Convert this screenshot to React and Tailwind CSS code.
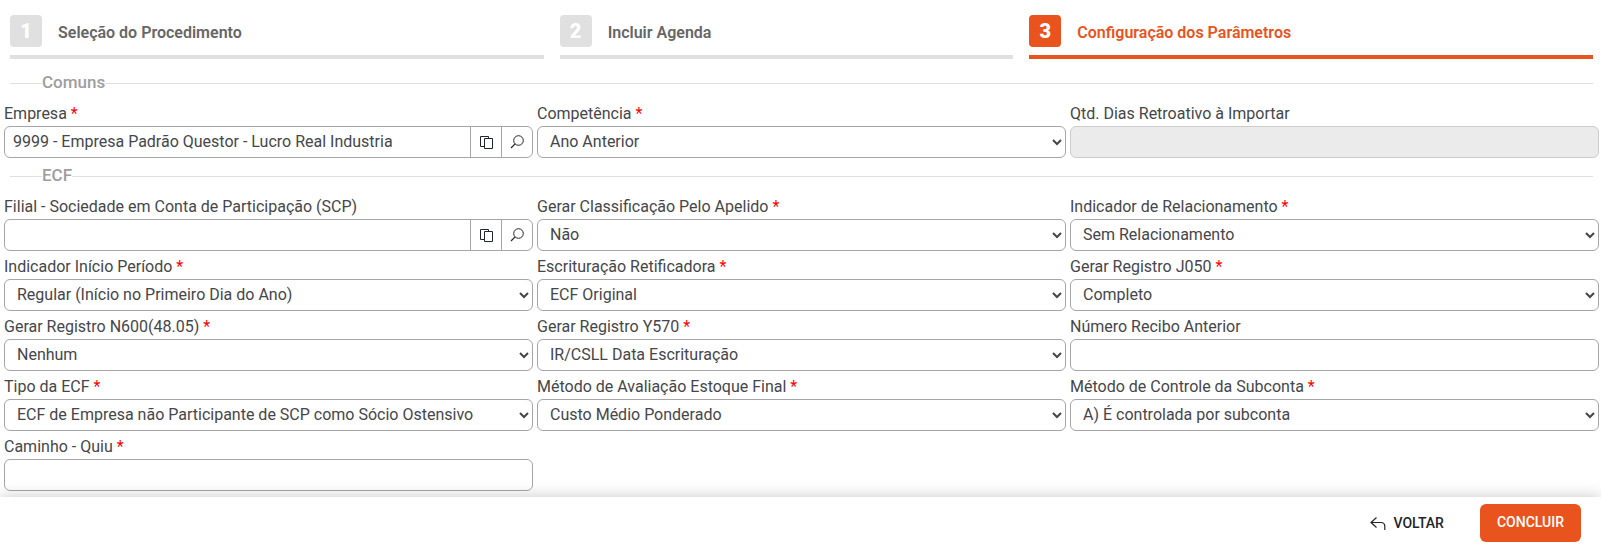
const steps = [
  { number: 1, title: 'Seleção do Procedimento' },
  { number: 2, title: 'Incluir Agenda' },
  { number: 3, title: 'Configuração dos Parâmetros', active: true },
];

const commonFields = [
  { id: 'empresa', label: 'Empresa', required: true, type: 'lookup', value: '9999 - Empresa Padrão Questor - Lucro Real Industria' },
  { id: 'competencia', label: 'Competência', required: true, type: 'select', value: 'Ano Anterior' },
  { id: 'dias', label: 'Qtd. Dias Retroativo à Importar', type: 'text', disabled: true },
];

const ecfFields = [
  { id: 'filial', label: 'Filial - Sociedade em Conta de Participação (SCP)', type: 'lookup' },
  { id: 'apelido', label: 'Gerar Classificação Pelo Apelido', required: true, type: 'select', value: 'Não' },
  { id: 'relacionamento', label: 'Indicador de Relacionamento', required: true, type: 'select', value: 'Sem Relacionamento' },
  { id: 'inicio', label: 'Indicador Início Período', required: true, type: 'select', value: 'Regular (Início no Primeiro Dia do Ano)' },
  { id: 'retificadora', label: 'Escrituração Retificadora', required: true, type: 'select', value: 'ECF Original' },
  { id: 'j050', label: 'Gerar Registro J050', required: true, type: 'select', value: 'Completo' },
  { id: 'n600', label: 'Gerar Registro N600(48.05)', required: true, type: 'select', value: 'Nenhum' },
  { id: 'y570', label: 'Gerar Registro Y570', required: true, type: 'select', value: 'IR/CSLL Data Escrituração' },
  { id: 'recibo', label: 'Número Recibo Anterior', type: 'text' },
  { id: 'tipo', label: 'Tipo da ECF', required: true, type: 'select', value: 'ECF de Empresa não Participante de SCP como Sócio Ostensivo' },
  { id: 'estoque', label: 'Método de Avaliação Estoque Final', required: true, type: 'select', value: 'Custo Médio Ponderado' },
  { id: 'subconta', label: 'Método de Controle da Subconta', required: true, type: 'select', value: 'A) É controlada por subconta' },
  { id: 'caminho', label: 'Caminho - Quiu', required: true, type: 'text' },
];

function CopyIcon() {
  return (
    <svg width="13" height="13" viewBox="0 0 13 13" fill="none" stroke="currentColor" aria-hidden="true">
      <path d="M4 10.5H.5V.5h8v2" />
      <path d="M4.5 2.5h8v10h-8z" />
    </svg>
  );
}

function SearchIcon() {
  return (
    <svg width="14" height="14" viewBox="0 0 14 14" fill="none" stroke="currentColor" aria-hidden="true">
      <circle cx="8.5" cy="5.5" r="4.8" />
      <path d="M5.1 8.9L1 13" strokeWidth="1.2" />
    </svg>
  );
}

function BackIcon() {
  return (
    <svg width="16" height="16" viewBox="0 0 16 16" fill="none" stroke="currentColor" strokeWidth="1.2" aria-hidden="true">
      <path d="M6.5 2.5L1 7.5l5.5 5" />
      <path d="M1 7.5h10c2.5 0 3.8 1.5 3.8 4V15" />
    </svg>
  );
}

function Step({ number, title, active }) {
  return (
    <li
      aria-current={active ? 'step' : undefined}
      className={`flex flex-auto items-center gap-4 border-b-4 pb-2 ${active ? 'border-[#e9531d] text-[#e9531d]' : 'border-[#e0e0e0] text-[#666666]'}`}
    >
      <span
        className={`flex size-8 items-center justify-center rounded text-xl font-black text-white ${active ? 'bg-[#e9531d]' : 'bg-[#e0e0e0]'}`}
      >
        {number}
      </span>
      <span className="pt-1 font-semibold">{title}</span>
    </li>
  );
}

function Control({ id, type, value, disabled }) {
  if (type === 'select') {
    return (
      <select id={id} className="h-8 w-full rounded-md border border-[#a6a6a6] bg-white pb-0.5 pl-2">
        <option>{value}</option>
      </select>
    );
  }

  if (type === 'lookup') {
    return (
      <div className="flex h-8 overflow-hidden rounded-md border border-[#a6a6a6]">
        <input id={id} type="text" defaultValue={value} className="min-w-0 flex-1 px-2" />
        <button type="button" aria-label="Copiar" className="flex w-[31px] items-center justify-center border-l border-[#a6a6a6] text-[#212529]">
          <CopyIcon />
        </button>
        <button type="button" aria-label="Pesquisar" className="flex w-[31px] items-center justify-center border-l border-[#a6a6a6] text-[#212529]">
          <SearchIcon />
        </button>
      </div>
    );
  }

  return (
    <input
      id={id}
      type="text"
      disabled={disabled}
      className="h-8 w-full rounded-md border border-[#a6a6a6] px-2 disabled:border-[#cccccc] disabled:bg-[#ebebeb]"
    />
  );
}

function Section({ title, fields }) {
  return (
    <section>
      <div className="mr-2 ml-2.5 flex h-6 items-center">
        <span className="h-px w-8 bg-[#e0e0e0]" />
        <h2 className="pb-0.5 text-[17px] leading-[22px] font-medium text-[#9e9e9e]">{title}</h2>
        <span className="h-px flex-1 bg-[#e0e0e0]" />
      </div>
      <div className="mt-[7px] grid grid-cols-3 gap-1 pr-0.5 pl-1">
        {fields.map((field) => (
          <div key={field.id}>
            <label htmlFor={field.id} className="block">
              {field.label}
              {field.required && <span className="text-[#ff0000]"> *</span>}
            </label>
            <Control {...field} />
          </div>
        ))}
      </div>
    </section>
  );
}

export default function App() {
  return (
    <div className="flex min-h-screen flex-col bg-white font-[Roboto,sans-serif] text-base text-[#45464b]">
      <main className="flex-1 pb-1.5">
        <ol className="mr-2 ml-2.5 flex gap-4 pt-[15px] pb-3">
          {steps.map((step) => (
            <Step key={step.number} {...step} />
          ))}
        </ol>
        <div className="flex flex-col gap-1.5">
          <Section title="Comuns" fields={commonFields} />
          <Section title="ECF" fields={ecfFields} />
        </div>
      </main>

      <footer className="flex h-[50px] items-center justify-end gap-9 bg-white pt-0.5 pr-5 text-sm font-medium shadow-[0_0_16px_rgba(0,0,0,0.22)]">
        <button type="button" className="flex items-center gap-2 text-[#212529]">
          <BackIcon />
          VOLTAR
        </button>
        <button type="button" className="h-[38px] rounded-md bg-[#e9531d] px-[17px] pb-0.5 text-white">
          CONCLUIR
        </button>
      </footer>
    </div>
  );
}
